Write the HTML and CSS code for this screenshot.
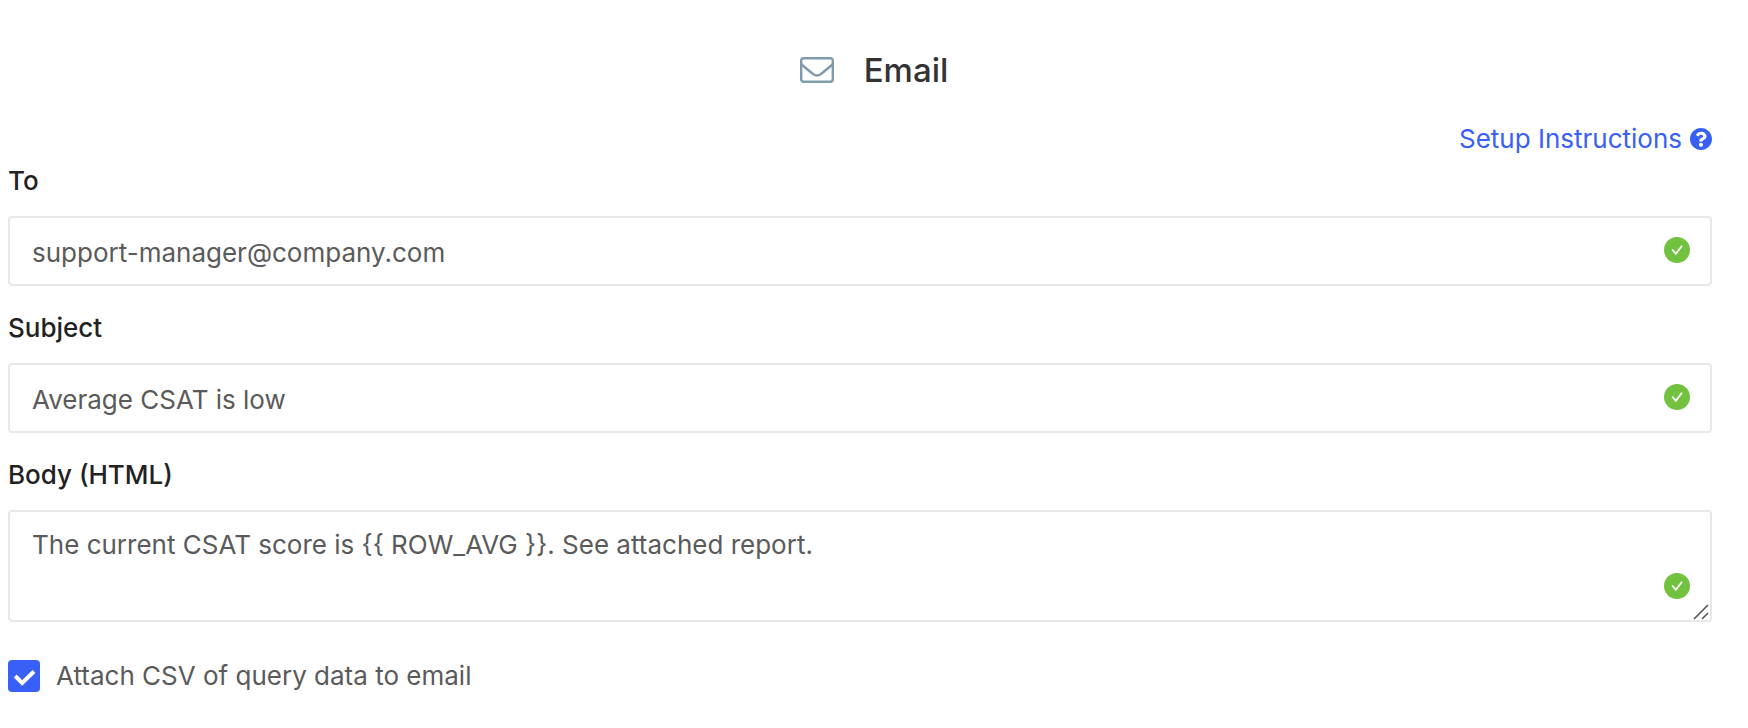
FILE: index.html
```html
<!DOCTYPE html>
<html lang="en">
<head>
<meta charset="utf-8">
<meta name="viewport" content="width=device-width, initial-scale=1">
<title>Email</title>
<link rel="stylesheet" href="styles.css">
</head>
<body>
<main class="page">
  <header class="header">
    <svg class="header-icon" viewBox="0 0 34 26" fill="none" stroke="#7f9bae" stroke-width="2" aria-hidden="true">
      <rect x="1.200" y="1.200" width="31.600" height="23.600" rx="2.500" stroke-width="2.400"/>
      <path d="M1 7C5 10.500 9 13.800 13 17C16 19.200 18 19.200 21 17C25 13.800 29 10.500 33 7" stroke-width="2.400"/>
    </svg>
    <h1 class="title">Email</h1>
  </header>
  <form class="form">
    <a class="help" href="#">Setup Instructions
      <svg class="help-icon" viewBox="8 8 496 496" fill="currentColor" aria-hidden="true">
        <path d="M504 256c0 136.997-111.043 248-248 248S8 392.997 8 256C8 119.083 119.043 8 256 8s248 111.083 248 248zM262.655 90c-54.497 0-89.255 22.957-116.549 63.758-3.536 5.286-2.353 12.415 2.715 16.258l34.699 26.310c5.205 3.947 12.621 3.008 16.665-2.122 17.864-22.658 30.113-35.797 57.303-35.797 20.429 0 45.698 13.148 45.698 32.958 0 14.976-12.363 22.667-32.534 33.976C247.128 238.528 216 254.941 216 296v4c0 6.627 5.373 12 12 12h56c6.627 0 12-5.373 12-12v-1.333c0-28.462 83.186-29.647 83.186-106.667 0-58.002-60.165-102-116.531-102zM256 338c-25.365 0-46 20.635-46 46 0 25.364 20.635 46 46 46s46-20.636 46-46c0-25.365-20.635-46-46-46z"/>
      </svg>
    </a>
    <div class="field">
      <label class="label" for="to">To</label>
      <div class="control">
        <input class="input" id="to" type="text" value="support-manager@company.com">
        <svg class="valid" viewBox="0 0 26 26" aria-hidden="true"><circle cx="13" cy="13" r="13" fill="#72c240"/><path d="M8.200 12.500L11.800 16.800L18 8.800" fill="none" stroke="#fff" stroke-width="1.800"/></svg>
      </div>
    </div>
    <div class="field">
      <label class="label" for="subject">Subject</label>
      <div class="control">
        <input class="input" id="subject" type="text" value="Average CSAT is low">
        <svg class="valid" viewBox="0 0 26 26" aria-hidden="true"><circle cx="13" cy="13" r="13" fill="#72c240"/><path d="M8.200 12.500L11.800 16.800L18 8.800" fill="none" stroke="#fff" stroke-width="1.800"/></svg>
      </div>
    </div>
    <div class="field">
      <label class="label" for="body">Body (HTML)</label>
      <div class="control">
        <textarea class="input textarea" id="body" rows="2">The current CSAT score is {{ ROW_AVG }}. See attached report.</textarea>
        <svg class="valid" viewBox="0 0 26 26" aria-hidden="true"><circle cx="13" cy="13" r="13" fill="#72c240"/><path d="M8.200 12.500L11.800 16.800L18 8.800" fill="none" stroke="#fff" stroke-width="1.800"/></svg>
        <svg class="grip" viewBox="0 0 16 16" fill="none" stroke="#555" stroke-width="1.600" aria-hidden="true"><path d="M1 15L15 1M9 15L15 9"/></svg>
      </div>
    </div>
    <label class="check">
      <span class="check-mark">
        <input class="check-input" type="checkbox" checked>
        <svg class="check-icon" viewBox="0 0 32 32" fill="none" stroke="#fff" stroke-width="4" aria-hidden="true"><path d="M7.200 16L14.200 23L26 11.500"/></svg>
      </span>
      Attach CSV of query data to email
    </label>
  </form>
</main>
</body>
</html>
```

FILE: styles.css
```css
*,
*::before,
*::after {
  box-sizing: border-box;
}

body {
  margin: 0;
  background: #fff;
  color: #5a5a5a;
  font-family: Inter, "Liberation Sans", sans-serif;
  font-size: 26px;
  line-height: 32px;
}

.page {
  padding: 50px 0 36px;
}

.header {
  display: flex;
  justify-content: center;
  align-items: center;
  gap: 30px;
}

.header-icon {
  width: 34px;
  height: 26px;
}

.title {
  margin: 0;
  color: #333;
  font-size: 33px;
  font-weight: 500;
  line-height: 40px;
}

.form {
  display: flex;
  flex-direction: column;
  padding: 33px 36px 0 8px;
}

.help {
  display: flex;
  align-self: flex-end;
  align-items: center;
  gap: 8px;
  margin-bottom: 10px;
  color: #3860f6;
  text-decoration: none;
}

.help-icon {
  width: 22px;
  height: 22px;
}

.field {
  display: flex;
  flex-direction: column;
  gap: 19px;
  margin-bottom: 26px;
}

.label {
  color: #222;
  font-weight: 500;
}

.control {
  display: flex;
  position: relative;
}

.input {
  width: 100%;
  height: 70px;
  margin: 0;
  padding: 2px 64px 0 22px;
  border: 2px solid #e8e8e8;
  border-radius: 4px;
  background: #fff;
  color: #5a5a5a;
  font: inherit;
  outline: none;
}

.textarea {
  height: auto;
  min-height: 112px;
  padding-top: 17px;
  resize: none;
}

.valid {
  position: absolute;
  right: 22px;
  bottom: 23px;
  width: 26px;
  height: 26px;
}

.grip {
  position: absolute;
  right: 3px;
  bottom: 2px;
  width: 16px;
  height: 16px;
}

.check {
  display: flex;
  align-self: flex-start;
  align-items: center;
  gap: 16px;
  margin-top: 12px;
}

.check-mark {
  display: flex;
  position: relative;
}

.check-input {
  width: 32px;
  height: 32px;
  margin: 0;
  border-radius: 4px;
  background: #fff;
  appearance: none;
}

.check-input:checked {
  background: #3860f6;
}

.check-icon {
  position: absolute;
  inset: 0;
  pointer-events: none;
}
```
